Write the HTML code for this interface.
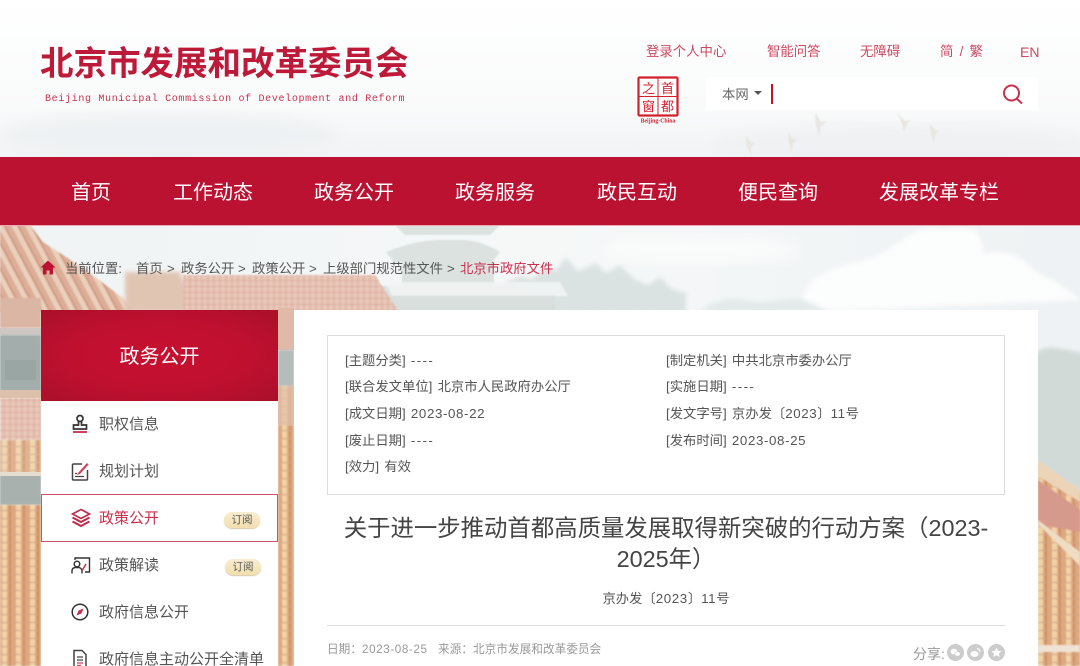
<!DOCTYPE html>
<html lang="zh-CN">
<head>
<meta charset="utf-8">
<title>关于进一步推动首都高质量发展取得新突破的行动方案</title>
<style>
html,body{margin:0;padding:0;width:1080px;height:666px;overflow:hidden;background:#f4f6f7}
body{position:relative;font-family:"Liberation Sans","Noto Sans CJK SC",sans-serif;color:#555}
.a{position:absolute;white-space:nowrap;line-height:20px;height:20px}
.bg{position:absolute;left:0;top:0}
.top{font-size:13.4px;color:#cb4a62;top:42px}
.nav{position:absolute;left:0;top:157px;width:1080px;height:68px;background:#bc1232}
.nav span{position:absolute;top:21px;font-size:20px;line-height:30px;color:#fff;white-space:nowrap}
.bc{font-size:13.33px;color:#555;top:258px}
.side{position:absolute;left:41px;top:310px;width:237px;height:356px;background:#fff;overflow:hidden}
.sh{position:absolute;left:0;top:0;width:237px;height:91px;background:radial-gradient(ellipse at center,#c8102f 0%,#bf1030 55%,#a9102a 100%);color:#fff;font-size:20px;line-height:94px;text-align:center}
.si{position:absolute;left:58px;font-size:15px;line-height:20px;color:#555;white-space:nowrap}
.active{position:absolute;left:0;top:184px;width:235px;height:46px;border:1px solid #cf5069}
.badge{position:absolute;width:36px;height:16px;border-radius:8px;background:linear-gradient(#f8edd0,#f2dfae);box-shadow:0 1px 1px #d5c9a8;font-size:10.5px;line-height:16px;text-align:center;color:#555}
.ic{position:absolute;left:30px}
.main{position:absolute;left:294px;top:310px;width:744px;height:356px;background:#fff}
.box{position:absolute;left:33px;top:25px;width:676px;height:158px;border:1px solid #ddd}
.in{position:absolute;font-size:13.33px;line-height:20px;color:#555;white-space:nowrap;word-spacing:1.5px}
.n{letter-spacing:.6px}
.d{letter-spacing:1.4px}
.title{position:absolute;left:33px;top:203px;width:678px;text-align:center;font-size:23.4px;line-height:31px;color:#444}
.no{position:absolute;left:33px;top:279px;width:678px;text-align:center;font-size:13.33px;line-height:20px;color:#555}
.line{position:absolute;left:33px;top:315px;width:678px;height:1px;background:#ddd}
.meta{position:absolute;font-size:11.67px;line-height:18px;color:#999;white-space:nowrap;top:331px}
.circ{position:absolute;top:334px;width:17px;height:17px;border-radius:50%;background:#ccc}
</style>
</head>
<body>
<svg class="bg" width="1080" height="666" viewBox="0 0 1080 666" xmlns="http://www.w3.org/2000/svg">
<defs>
<linearGradient id="sky" x1="0" y1="0" x2="0" y2="1"><stop offset="0" stop-color="#fff"/><stop offset=".7" stop-color="#f9fafa"/><stop offset="1" stop-color="#f1f3f5"/></linearGradient>
<linearGradient id="sky2" x1="0" y1="0" x2="1" y2="0"><stop offset="0" stop-color="#eff3f4"/><stop offset=".5" stop-color="#f6f8f8"/><stop offset="1" stop-color="#eef2f4"/></linearGradient>
<pattern id="t1" width="12" height="7" patternUnits="userSpaceOnUse" patternTransform="rotate(-28)">
<rect width="12" height="7" fill="#dcae98"/><rect width="5" height="7" fill="#ebd0bc"/><rect x="5" width="2" height="7" fill="#cf9a84"/>
</pattern>
<pattern id="t2" width="14" height="8" patternUnits="userSpaceOnUse">
<rect width="14" height="8" fill="#dfa97f"/><rect x="2" width="5" height="8" fill="#f0d3a6"/><rect x="9" width="2" height="8" fill="#cc8c66"/><rect y="6" width="14" height="1" fill="#d6a583"/>
</pattern>
<pattern id="t3" width="6" height="6" patternUnits="userSpaceOnUse">
<rect width="6" height="6" fill="#e3bdae"/><rect width="2" height="6" fill="#ebcdc1"/><rect y="4" width="6" height="1" fill="#deb0a1"/>
</pattern>
<filter id="b1"><feGaussianBlur stdDeviation=".8"/></filter>
<filter id="b6"><feGaussianBlur stdDeviation="7"/></filter>
<filter id="b2"><feGaussianBlur stdDeviation="2"/></filter>
</defs>
<rect width="1080" height="157" fill="url(#sky)"/>
<ellipse cx="170" cy="135" rx="170" ry="22" fill="#eef1f3" filter="url(#b6)"/>
<ellipse cx="900" cy="145" rx="190" ry="20" fill="#f0f1f3" filter="url(#b6)"/>
<g fill="#e8e6e0" filter="url(#b1)">
<path d="M815 112l6 10 7-1-7 5-2 10-3-10z"/><path d="M897 113l8 8 6-1-4 4-3 8-2-9z"/><path d="M930 123l5 7 5 1-5 3-1 8-3-8z"/><path d="M745 135l6 8 4 0-4 4 0 9-4-10z"/><path d="M788 133l5 6 4 1-4 3-1 10-3-10z"/>
</g>
<rect y="225" width="1080" height="441" fill="url(#sky2)"/>
<ellipse cx="700" cy="250" rx="100" ry="14" fill="#fafbfb" filter="url(#b6)"/>
<path d="M800 312q0-40 60-50 20-6 40-20 20-18 45-12 15-4 30 0 10 12 8 24 20-6 40 6 15 15 30 20 12 8 27 20z" fill="#fcfdfd" filter="url(#b2)"/>
<path d="M500 312l6-30 14-6 12 3 14-12 10 4 10-14 12 14 18-8 10 10 14-8 14 14 14 6 12-8 12 12 14 4v22z" fill="#dbe3e2" filter="url(#b2)"/>
<path d="M700 312l10-8 20-6 30 4 40-4 30 14z" fill="#e4eaea" filter="url(#b2)"/>
<g fill="#dbe2e0" filter="url(#b1)">
<path d="M395 225h105l-10 10-85 0z"/><path d="M386 252q30-12 55-12h20q20 0 39 12l-8 10H394z"/>
<rect x="402" y="262" width="92" height="24"/><path d="M382 286h140l18 26H382z"/>
</g>
<path d="M385 282h175l8 14H392z" fill="#f3f5f5" opacity=".85" filter="url(#b1)"/>
<rect x="385" y="296" width="170" height="16" fill="#d8dfdd" filter="url(#b1)"/>
<path d="M0 225h30l13 17 40 26 40 30 10 14H0z" fill="url(#t1)" filter="url(#b1)"/>
<path d="M125 272h55l10 26 12 14h-77z" fill="#e0c5b3" filter="url(#b2)"/>
<path d="M183 275h192l24 37H183z" fill="url(#t3)" filter="url(#b1)"/>
<rect x="0" y="298" width="41" height="30" fill="#dcb6a5" filter="url(#b1)"/>
<rect x="0" y="328" width="41" height="7" fill="#cfc8c2"/>
<rect x="0" y="335" width="41" height="56" fill="#a3adab" filter="url(#b1)"/>
<rect x="5" y="360" width="31" height="20" fill="#94a3a0" opacity=".7"/>
<rect x="0" y="390" width="41" height="8" fill="#dcc0ab"/>
<rect x="0" y="398" width="41" height="42" fill="url(#t3)" filter="url(#b1)"/>
<rect x="0" y="440" width="41" height="35" fill="url(#t2)" filter="url(#b1)" opacity=".85"/>
<rect x="0" y="475" width="41" height="30" fill="#a9b1af" filter="url(#b1)"/>
<rect x="0" y="472" width="41" height="4" fill="#e6dccf"/>
<rect x="0" y="505" width="41" height="161" fill="url(#t2)" filter="url(#b1)"/>
<rect x="278" y="308" width="16" height="42" fill="#e0b9a9"/>
<rect x="278" y="350" width="16" height="36" fill="#b4bdb9" filter="url(#b1)"/>
<rect x="278" y="386" width="16" height="280" fill="url(#t2)" filter="url(#b1)"/>
<rect x="278" y="386" width="16" height="40" fill="#e2c0ae" opacity=".7"/>
<path d="M1030 358q10-12 25-10t30 6v150h-55z" fill="#d2dad8" filter="url(#b2)"/>
<path d="M1038 462l42 32v172h-42z" fill="url(#t2)" filter="url(#b1)"/>
<path d="M1038 460l42 30v12l-42-26z" fill="#ecd4b8" filter="url(#b1)"/>
<path d="M1038 480l42 30v22l-42-8z" fill="#d59a8c" filter="url(#b1)"/>
<path d="M1038 524l42 42v-14l-42-32z" fill="#efdcc4" filter="url(#b1)"/>
<rect x="1038" y="645" width="42" height="7" fill="#efe3d6" filter="url(#b1)"/>
<rect x="0" y="225" width="1080" height="1" fill="#eba9b6"/>
</svg>

<div class="a" style="left:40px;top:45px;height:40px;line-height:40px;font-size:33.5px;font-weight:700;color:#bc1a38">北京市发展和改革委员会</div>
<div class="a" style="left:45px;top:90px;font-family:'Liberation Mono',monospace;font-size:10px;letter-spacing:.67px;color:#c8324f">Beijing Municipal Commission of Development and Reform</div>

<div class="a top" style="left:646px">登录个人中心</div>
<div class="a top" style="left:767px">智能问答</div>
<div class="a top" style="left:860px">无障碍</div>
<div class="a top" style="left:940px;word-spacing:2.500px">简 / 繁</div>
<div class="a top" style="left:1020px;font-size:14px">EN</div>

<svg class="bg" style="left:635px;top:75px" width="48" height="50" viewBox="0 0 48 50" xmlns="http://www.w3.org/2000/svg">
<rect x="3.500" y="2.500" width="39" height="38" rx="1" fill="#fff" stroke="#d2202f" stroke-width="2.200"/>
<path d="M23 3v37M4 21.500h38" stroke="#d2202f" stroke-width="1" fill="none"/>
<text x="13.500" y="18" font-size="13" text-anchor="middle" fill="#d2202f" font-family="'Noto Sans CJK SC',sans-serif">之</text>
<text x="32.500" y="18" font-size="13" text-anchor="middle" fill="#d2202f" font-family="'Noto Sans CJK SC',sans-serif">首</text>
<text x="13.500" y="36" font-size="13" text-anchor="middle" fill="#d2202f" font-family="'Noto Sans CJK SC',sans-serif">窗</text>
<text x="32.500" y="36" font-size="13" text-anchor="middle" fill="#d2202f" font-family="'Noto Sans CJK SC',sans-serif">都</text>
<text x="23" y="47.500" font-size="5.800" font-weight="700" text-anchor="middle" fill="#d2202f" font-family="'Liberation Serif',serif">Beijing-China</text>
</svg>

<div style="position:absolute;left:706px;top:77px;width:332px;height:33px;background:#fff"></div>
<div class="a" style="left:722px;top:85px;font-size:13.33px;color:#666">本网</div>
<div style="position:absolute;left:754px;top:91px;width:0;height:0;border-left:4px solid transparent;border-right:4px solid transparent;border-top:4px solid #555"></div>
<div style="position:absolute;left:771px;top:84px;width:2px;height:20px;background:#c8102e"></div>
<svg class="bg" style="left:1001px;top:83px" width="24" height="24" viewBox="0 0 24 24" xmlns="http://www.w3.org/2000/svg"><circle cx="10.500" cy="10" r="7.500" fill="none" stroke="#c8324f" stroke-width="2"/><path d="M15.500 15.500l5.500 5" stroke="#c8324f" stroke-width="2" fill="none"/></svg>

<div class="nav">
<span style="left:71px">首页</span>
<span style="left:173px">工作动态</span>
<span style="left:314px">政务公开</span>
<span style="left:455px">政务服务</span>
<span style="left:597px">政民互动</span>
<span style="left:738px">便民查询</span>
<span style="left:879px">发展改革专栏</span>
</div>

<svg class="bg" style="left:40px;top:260px" width="16" height="15" viewBox="0 0 16 15" xmlns="http://www.w3.org/2000/svg"><path d="M8 .5L.5 7.500h2.500V14.500h3.500v-4h3v4H13V7.500h2.500z" fill="#bc1232"/></svg>
<div class="a bc" style="left:65px;top:259px">当前位置:</div>
<div class="a bc" style="left:136px;top:259px">首页</div>
<div class="a bc" style="left:167px;top:259px">&gt;</div>
<div class="a bc" style="left:181px;top:259px">政务公开</div>
<div class="a bc" style="left:238px;top:259px">&gt;</div>
<div class="a bc" style="left:252px;top:259px">政策公开</div>
<div class="a bc" style="left:309px;top:259px">&gt;</div>
<div class="a bc" style="left:323px;top:259px">上级部门规范性文件</div>
<div class="a bc" style="left:447px;top:259px">&gt;</div>
<div class="a bc" style="left:460px;top:259px;color:#c8304f">北京市政府文件</div>

<div class="side">
<div class="sh">政务公开</div>
<div class="active"></div>

<svg class="ic" style="top:104px" width="18" height="20" viewBox="0 0 18 20" xmlns="http://www.w3.org/2000/svg"><circle cx="9" cy="4.500" r="3" fill="none" stroke="#333" stroke-width="1.700"/><path d="M7.500 7.500v3.500H2.500v4H15.500v-4h-5V7.500" fill="none" stroke="#333" stroke-width="1.700"/><path d="M2 18h14" stroke="#c8304f" stroke-width="1.800"/></svg>
<div class="si" style="top:105px">职权信息</div>

<svg class="ic" style="top:151px" width="18" height="20" viewBox="0 0 18 20" xmlns="http://www.w3.org/2000/svg"><path d="M11 3H2.500a1 1 0 0 0-1 1v14a1 1 0 0 0 1 1h13a1 1 0 0 0 1-1V9" fill="none" stroke="#444" stroke-width="1.500"/><path d="M7 12L16 2l1.500 1.500L9 13l-3 1z" fill="#d4405c"/><path d="M4 15.500h9M4 12.500h2" stroke="#444" stroke-width="1.200"/></svg>
<div class="si" style="top:152px">规划计划</div>

<svg class="ic" style="top:198px" width="20" height="20" viewBox="0 0 20 20" xmlns="http://www.w3.org/2000/svg"><path d="M10 1.500l8.500 4.500-8.500 4.500L1.500 6z" fill="none" stroke="#c0284a" stroke-width="1.600"/><path d="M1.500 9.500l8.500 4.500 8.500-4.500M1.500 13.500l8.500 4.500 8.500-4.500" fill="none" stroke="#c0284a" stroke-width="2"/></svg>
<div class="si" style="top:199px;color:#c8304f">政策公开</div>
<div class="badge" style="left:183px;top:202px">订阅</div>

<svg class="ic" style="top:245px" width="20" height="20" viewBox="0 0 20 20" xmlns="http://www.w3.org/2000/svg"><path d="M4 5V3h14.500v14H14" fill="none" stroke="#333" stroke-width="1.400"/><circle cx="6" cy="9" r="2.800" fill="none" stroke="#333" stroke-width="1.400"/><path d="M1 18.500v-2.500q0-3 3-3.500h4q2 .5 3 2.500v3.500" fill="none" stroke="#333" stroke-width="1.400"/><path d="M11.500 15l3.500-6" stroke="#c8304f" stroke-width="1.500"/></svg>
<div class="si" style="top:246px">政策解读</div>
<div class="badge" style="left:184px;top:249px">订阅</div>

<svg class="ic" style="top:292px" width="18" height="20" viewBox="0 0 18 20" xmlns="http://www.w3.org/2000/svg"><circle cx="9" cy="10" r="7.800" fill="none" stroke="#333" stroke-width="1.500"/><path d="M12.500 6.500L10.500 11.500 5.500 13.500 7.500 8.500z" fill="#c8304f"/></svg>
<div class="si" style="top:293px">政府信息公开</div>

<svg class="ic" style="top:339px" width="18" height="20" viewBox="0 0 18 20" xmlns="http://www.w3.org/2000/svg"><path d="M3 1.500h8l4 4V19H3z" fill="none" stroke="#444" stroke-width="1.500"/><path d="M6 8h6M6 11h6" stroke="#444" stroke-width="1.200"/><path d="M6 14h6M6 16.500h4" stroke="#d4405c" stroke-width="1.300"/></svg>
<div class="si" style="top:340px">政府信息主动公开全清单</div>
</div>

<div class="main">
<div class="box"></div>
<div class="in" style="left:51px;top:41px">[主题分类] <span class="d">----</span></div>
<div class="in" style="left:51px;top:67px">[联合发文单位] 北京市人民政府办公厅</div>
<div class="in" style="left:51px;top:94px">[成文日期] <span class="n">2023-08-22</span></div>
<div class="in" style="left:51px;top:121px">[废止日期] <span class="d">----</span></div>
<div class="in" style="left:51px;top:147px">[效力] 有效</div>
<div class="in" style="left:372px;top:41px">[制定机关] 中共北京市委办公厅</div>
<div class="in" style="left:372px;top:67px">[实施日期] <span class="d">----</span></div>
<div class="in" style="left:372px;top:94px">[发文字号] 京办发〔<span class="n">2023</span>〕<span class="n">11</span>号</div>
<div class="in" style="left:372px;top:121px">[发布时间] <span class="n">2023-08-25</span></div>
<div class="title">关于进一步推动首都高质量发展取得新突破的行动方案（2023-2025年）</div>
<div class="no">京办发〔<span class="n">2023</span>〕<span class="n">11</span>号</div>
<div class="line"></div>
<div class="meta" style="left:33px">日期：<span class="n">2023-08-25</span></div>
<div class="meta" style="left:144px">来源：北京市发展和改革委员会</div>
<div class="a" style="left:619px;top:334px;font-size:14px;color:#999">分享:</div>
<div class="circ" style="left:653px"></div>
<div class="circ" style="left:673px"></div>
<div class="circ" style="left:694px"></div>
<svg class="bg" style="left:653px;top:334px" width="58" height="17" viewBox="0 0 58 17" xmlns="http://www.w3.org/2000/svg"><ellipse cx="7" cy="7.500" rx="3.500" ry="2.800" fill="#fff"/><ellipse cx="10.500" cy="10" rx="2.800" ry="2.200" fill="#fff" stroke="#ccc" stroke-width=".6"/><ellipse cx="27.500" cy="10" rx="4" ry="3" fill="#fff"/><path d="M30 4.500q3 .5 3 3.500" stroke="#fff" stroke-width="1.200" fill="none"/><path d="M49.500 3.500l1.500 3.300 3.500.4-2.600 2.300.8 3.500-3.200-1.800-3.200 1.800.8-3.500-2.600-2.300 3.500-.4z" fill="#fff"/></svg>
</div>
</body>
</html>
